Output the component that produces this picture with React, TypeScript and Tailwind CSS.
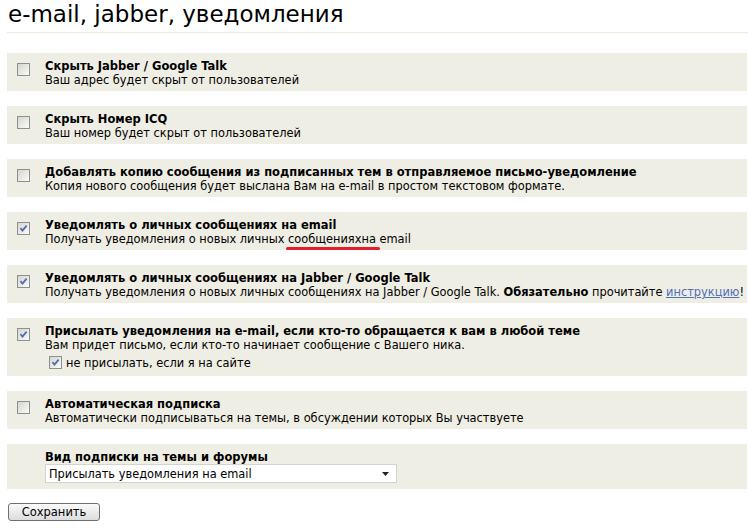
import React from "react";

const font = "font-['DejaVu_Sans','Verdana',sans-serif]";

function Box({ checked }: { checked?: boolean }) {
  return (
    <span className="relative inline-block w-[13px] h-[13px] shrink-0 border border-[#8f8f8f] bg-gradient-to-br from-[#d6d6ce] to-[#fbfbf8]">
      {checked && (
        <svg viewBox="0 0 11 11" className="absolute left-0 top-0 w-[11px] h-[11px]">
          <path d="M2.5 5.2 L4.5 7.6 L8.6 2.6" fill="none" stroke="#4e6db5" strokeWidth="1.8" />
        </svg>
      )}
    </span>
  );
}

function Row({
  checked,
  title,
  children,
}: {
  checked?: boolean;
  title: React.ReactNode;
  children?: React.ReactNode;
}) {
  return (
    <div className="flex bg-[#efeee4] pl-[10px] pt-[6px] pb-[4px]">
      <div className="pt-[4px]">
        <Box checked={checked} />
      </div>
      <div className="ml-[15px] flex flex-col">
        <div className="font-bold text-[11.5px] leading-[14px]">{title}</div>
        <div className="leading-[14px]">{children}</div>
      </div>
    </div>
  );
}

export default function App() {
  return (
    <div className={`w-[748px] h-[529px] bg-white text-black text-[11.4px] ${font}`}>
      <h1 className="ml-[7px] h-[33px] border-b border-[#ebebdd] pl-[1px] text-[23px] leading-[28px] font-normal">
        e-mail, jabber, уведомления
      </h1>

      <div className="ml-[7px] w-[740px] mt-[20px] flex flex-col gap-[15px]">
        <Row title="Скрыть Jabber / Google Talk">Ваш адрес будет скрыт от пользователей</Row>
        <Row title="Скрыть Номер ICQ">Ваш номер будет скрыт от пользователей</Row>
        <Row title="Добавлять копию сообщения из подписанных тем в отправляемое письмо-уведомление">
          Копия нового сообщения будет выслана Вам на e-mail в простом текстовом формате.
        </Row>
        <Row checked title="Уведомлять о личных сообщениях на email">
          Получать уведомления о новых личных{" "}
          <span className="relative">
            сообщенияхна
            <span className="absolute left-[-2px] right-[-4px] top-[15px] h-[3px] rounded-full bg-[#e3202a]" />
          </span>{" "}
          email
        </Row>
        <Row checked title="Уведомлять о личных сообщениях на Jabber / Google Talk">
          Получать уведомления о новых личных сообщениях на Jabber / Google Talk.{" "}
          <b>Обязательно</b> прочитайте{" "}
          <a className="text-[#4f70b6] underline">инструкцию</a>!
        </Row>
        <div className="flex bg-[#efeee4] pl-[10px] pt-[6px] pb-[6px]">
          <div className="pt-[4px]">
            <Box checked />
          </div>
          <div className="ml-[15px] flex flex-col">
            <div className="font-bold text-[11.5px] leading-[14px]">
              Присылать уведомления на e-mail, если кто-то обращается к вам в любой теме
            </div>
            <div className="leading-[14px]">
              Вам придет письмо, если кто-то начинает сообщение с Вашего ника.
            </div>
            <div className="mt-[3px] h-[15px] flex items-center pl-[4px] gap-[4px]">
              <Box checked />
              <span className="leading-[14px]">не присылать, если я на сайте</span>
            </div>
          </div>
        </div>
        <Row title="Автоматическая подписка">
          Автоматически подписываться на темы, в обсуждении которых Вы участвуете
        </Row>
        <div className="bg-[#efeee4] pl-[38px] pt-[7px] pb-[6px]">
          <div className="font-bold text-[11.5px] leading-[13px]">Вид подписки на темы и форумы</div>
          <div className="w-[352px] h-[19px] border border-[#d4d4cc] bg-white flex items-center justify-between pl-[3px] pr-[7px]">
            <span className="leading-[14px]">Присылать уведомления на email</span>
            <svg viewBox="0 0 7 4" className="w-[7px] h-[4px]">
              <path d="M0 0 H7 L3.5 4 Z" fill="#222" />
            </svg>
          </div>
        </div>
      </div>

      <button className="ml-[8px] mt-[14px] w-[92px] h-[18px] rounded-[3px] border border-[#707070] bg-gradient-to-b from-[#fbfbfb] to-[#dcdcdc] text-[11.5px] leading-[14px] text-black">
        Сохранить
      </button>
    </div>
  );
}
